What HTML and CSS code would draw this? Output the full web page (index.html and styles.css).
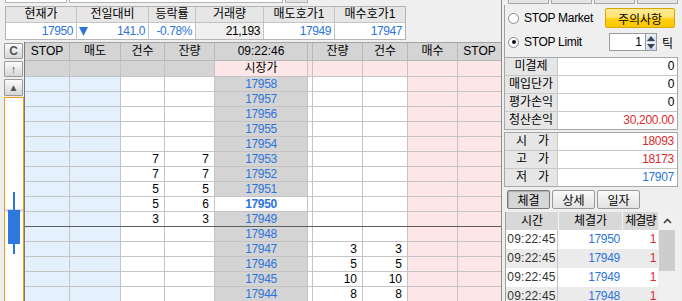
FILE: index.html
```html
<!DOCTYPE html>
<html>

<head>
  <title>STOP 주문</title>
  <link rel="stylesheet" href="styles.css">
</head>

<body>
  <div class="screen">
    <div class="left-pane">
      <div class="top-strip">
        <span class="stub stub-a"></span>
        <span class="stub stub-b"></span>
        <span class="stub stub-btn"></span>
      </div>

      <!-- 현재가 요약 -->
      <div class="summary">
        <div class="sum-head">현재가</div>
        <div class="sum-head">전일대비</div>
        <div class="sum-head">등락률</div>
        <div class="sum-head">거래량</div>
        <div class="sum-head">매도호가1</div>
        <div class="sum-head">매수호가1</div>
        <div class="sum-val blue">17950</div>
        <div class="sum-val blue change">
          <svg class="down" width="9" height="9" viewBox="0 0 9 9"><polygon points="0,0 9,0 4.5,9" fill="#2d74dc"/></svg>
          <span>141.0</span>
        </div>
        <div class="sum-val blue">-0.78%</div>
        <div class="sum-val dim">21,193</div>
        <div class="sum-val blue">17949</div>
        <div class="sum-val blue">17947</div>
      </div>

      <!-- 호가창 -->
      <div class="book">
        <div class="side">
          <div class="mini-btn bold">C</div>
          <div class="mini-btn mid">↑</div>
          <div class="mini-btn tall">▲</div>
          <div class="chart">
            <svg width="18" height="204" viewBox="0 0 18 204">
              <rect x="0" y="111" width="18" height="3" fill="#d8d8f0"/>
              <rect x="8" y="94" width="2" height="62" fill="#2d74dc"/>
              <rect x="3" y="112" width="12" height="34" fill="#2f78e0"/>
            </svg>
          </div>
        </div>

        <div class="grid">
          <div class="row head">
            <span>STOP</span><span>매도</span><span>건수</span><span>잔량</span><span>09:22:46</span><span></span><span>잔량</span><span>건수</span><span>매수</span><span>STOP</span>
          </div>
          <div class="row market">
            <span class="gr"></span><span class="gr"></span><span class="gr"></span><span class="gr"></span><span class="pk ctr">시장가</span><span class="pk"></span><span class="pk"></span><span class="pk"></span><span class="pk"></span><span class="pk"></span>
          </div>
          <div class="row"><span class="bl"></span><span class="bl"></span><span class="wh"></span><span class="wh"></span><span class="gr px">17958</span><span class="wh"></span><span class="wh"></span><span class="wh"></span><span class="pk"></span><span class="pk"></span></div>
          <div class="row"><span class="bl"></span><span class="bl"></span><span class="wh"></span><span class="wh"></span><span class="gr px">17957</span><span class="wh"></span><span class="wh"></span><span class="wh"></span><span class="pk"></span><span class="pk"></span></div>
          <div class="row"><span class="bl"></span><span class="bl"></span><span class="wh"></span><span class="wh"></span><span class="gr px">17956</span><span class="wh"></span><span class="wh"></span><span class="wh"></span><span class="pk"></span><span class="pk"></span></div>
          <div class="row"><span class="bl"></span><span class="bl"></span><span class="wh"></span><span class="wh"></span><span class="gr px">17955</span><span class="wh"></span><span class="wh"></span><span class="wh"></span><span class="pk"></span><span class="pk"></span></div>
          <div class="row"><span class="bl"></span><span class="bl"></span><span class="wh"></span><span class="wh"></span><span class="gr px">17954</span><span class="wh"></span><span class="wh"></span><span class="wh"></span><span class="pk"></span><span class="pk"></span></div>
          <div class="row"><span class="bl"></span><span class="bl"></span><span class="wh n">7</span><span class="wh n">7</span><span class="gr px">17953</span><span class="wh"></span><span class="wh"></span><span class="wh"></span><span class="pk"></span><span class="pk"></span></div>
          <div class="row"><span class="bl"></span><span class="bl"></span><span class="wh n">7</span><span class="wh n">7</span><span class="gr px">17952</span><span class="wh"></span><span class="wh"></span><span class="wh"></span><span class="pk"></span><span class="pk"></span></div>
          <div class="row"><span class="bl"></span><span class="bl"></span><span class="wh n">5</span><span class="wh n">5</span><span class="gr px">17951</span><span class="wh"></span><span class="wh"></span><span class="wh"></span><span class="pk"></span><span class="pk"></span></div>
          <div class="row"><span class="bl"></span><span class="bl"></span><span class="wh n">5</span><span class="wh n">6</span><span class="wh px now">17950</span><span class="wh"></span><span class="wh"></span><span class="wh"></span><span class="pk"></span><span class="pk"></span></div>
          <div class="row sep"><span class="bl"></span><span class="bl"></span><span class="wh n">3</span><span class="wh n">3</span><span class="gr px">17949</span><span class="wh"></span><span class="wh"></span><span class="wh"></span><span class="pk"></span><span class="pk"></span></div>
          <div class="row"><span class="bl"></span><span class="bl"></span><span class="wh"></span><span class="wh"></span><span class="gr px">17948</span><span class="wh"></span><span class="wh"></span><span class="wh"></span><span class="pk"></span><span class="pk"></span></div>
          <div class="row"><span class="bl"></span><span class="bl"></span><span class="wh"></span><span class="wh"></span><span class="gr px">17947</span><span class="wh"></span><span class="wh n">3</span><span class="wh n">3</span><span class="pk"></span><span class="pk"></span></div>
          <div class="row"><span class="bl"></span><span class="bl"></span><span class="wh"></span><span class="wh"></span><span class="gr px">17946</span><span class="wh"></span><span class="wh n">5</span><span class="wh n">5</span><span class="pk"></span><span class="pk"></span></div>
          <div class="row"><span class="bl"></span><span class="bl"></span><span class="wh"></span><span class="wh"></span><span class="gr px">17945</span><span class="wh"></span><span class="wh n">10</span><span class="wh n">10</span><span class="pk"></span><span class="pk"></span></div>
          <div class="row"><span class="bl"></span><span class="bl"></span><span class="wh"></span><span class="wh"></span><span class="gr px">17944</span><span class="wh"></span><span class="wh n">8</span><span class="wh n">8</span><span class="pk"></span><span class="pk"></span></div>
        </div>
      </div>
    </div>

    <div class="splitter"></div>

    <div class="right-pane">
      <div class="rp-top">
        <span class="rp-stub"></span><span class="rp-stub"></span><span class="rp-stub"></span><span class="rp-stub"></span>
      </div>

      <div class="opts">
        <div class="opt-row">
          <span class="radio"></span>
          <span class="opt-label">STOP Market</span>
          <button class="warn-btn">주의사항</button>
        </div>
        <div class="opt-row">
          <span class="radio checked"></span>
          <span class="opt-label">STOP Limit</span>
          <div class="spin-group">
            <div class="spin-input">1</div>
            <div class="spin-btns">
              <span class="spin-btn"><svg width="8" height="5" viewBox="0 0 8 5"><polygon points="0,5 8,5 4,0" fill="#3a4556"/></svg></span>
              <span class="spin-btn"><svg width="8" height="5" viewBox="0 0 8 5"><polygon points="0,0 8,0 4,5" fill="#3a4556"/></svg></span>
            </div>
            <span class="tick">틱</span>
          </div>
        </div>
      </div>

      <div class="info">
        <div class="info-label">미결제</div><div class="info-val">0</div>
        <div class="info-label">매입단가</div><div class="info-val">0</div>
        <div class="info-label">평가손익</div><div class="info-val">0</div>
        <div class="info-label">청산손익</div><div class="info-val red">30,200.00</div>
      </div>
      <div class="info second">
        <div class="info-label"><span class="spread">시가</span></div><div class="info-val red">18093</div>
        <div class="info-label"><span class="spread">고가</span></div><div class="info-val red">18173</div>
        <div class="info-label"><span class="spread">저가</span></div><div class="info-val blue">17907</div>
      </div>

      <div class="tabs">
        <button class="tab active">체결</button>
        <button class="tab">상세</button>
        <button class="tab">일자</button>
      </div>

      <div class="trade">
        <div class="trade-body">
          <div class="tr-head"><span>시간</span><span>체결가</span><span class="tight">체결량</span></div>
          <div class="tr-row"><span class="t">09:22:45</span><span class="blue">17950</span><span class="red">1</span></div>
          <div class="tr-row alt"><span class="t">09:22:45</span><span class="blue">17949</span><span class="red">1</span></div>
          <div class="tr-row"><span class="t">09:22:45</span><span class="blue">17949</span><span class="red">1</span></div>
          <div class="tr-row alt"><span class="t">09:22:45</span><span class="blue">17948</span><span class="red">1</span></div>
        </div>
        <div class="scroll">
          <div class="sc-up"><svg width="9" height="6" viewBox="0 0 9 6"><polyline points="1,5 4.5,1.5 8,5" fill="none" stroke="#404040" stroke-width="1.6"/></svg></div>
          <div class="sc-thumb"></div>
          <div class="sc-track"></div>
        </div>
      </div>
    </div>
  </div>
</body>

</html>
```

FILE: styles.css
```css
/* 주문창 - STOP 호가 화면 */
body {
  margin: 0;
  width: 682px;
  height: 301px;
  overflow: hidden;
  background-color: #efefef;
  font-family: "Liberation Sans", "Noto Sans CJK KR", sans-serif;
  font-size: 12px;
  color: #000000;
}

.screen {
  display: flex;
  height: 301px;
}

.left-pane {
  width: 501px;
  flex: none;
}

.splitter {
  width: 1px;
  flex: none;
  background-color: #8c8c8c;
}

.right-pane {
  flex: 1;
}

.blue {
  color: #2d74dc;
}

.red {
  color: #dd2c2c;
}

/* top controls (cut off) */
.top-strip {
  display: flex;
  gap: 2px;
  height: 5px;
  padding-left: 5px;
}

.stub {
  height: 2px;
  background-color: #ffffff;
  border: 1px solid #b4b4b4;
  border-top: none;
}

.stub-a {
  width: 60px;
}

.stub-b {
  width: 212px;
}

.stub-btn {
  width: 21px;
  background-color: #e2e2e2;
}

/* summary */
.summary {
  display: grid;
  grid-template-columns: 70px 71px 46px 67px 70px 70px;
  grid-template-rows: 15px 16px;
  gap: 1px;
  width: max-content;
  margin: 1px 0 0 5px;
  background-color: #c4c4c4;
  border: 1px solid #b4b4b4;
}

.sum-head {
  background-color: #e6e6e6;
  text-align: center;
  line-height: 15px;
}

.sum-val {
  background-color: #ffffff;
  text-align: right;
  padding-right: 3px;
  line-height: 16px;
  letter-spacing: -0.4px;
}

.sum-val.dim {
  background-color: #f0f0f0;
}

.change {
  display: flex;
  align-items: center;
  justify-content: space-between;
  padding-left: 2px;
}

/* order book */
.book {
  display: flex;
  margin-top: 2px;
}

.side {
  width: 20px;
  margin-left: 4px;
  display: flex;
  flex-direction: column;
  height: 260px;
}

.mini-btn {
  box-sizing: border-box;
  width: 19px;
  height: 16px;
  margin-top: 1px;
  border: 1px solid #9a9a9a;
  border-radius: 1px;
  background: linear-gradient(#fbfbfb, #d6d6d6);
  color: #555555;
  text-align: center;
  font-size: 11px;
  line-height: 14px;
}

.mini-btn.bold {
  font-weight: bold;
  font-size: 12px;
}

.mini-btn.mid {
  margin-top: 2px;
}

.mini-btn.tall {
  height: 17px;
  margin-top: 2px;
  line-height: 15px;
  font-size: 10px;
}

.chart {
  flex: 1;
  margin-top: 1px;
  background-color: #ffffff;
  border: 1px solid #f39a1a;
  border-bottom: none;
}

.chart svg {
  display: block;
}

.grid {
  border-left: 1px solid #7a7a7a;
}

.row {
  display: grid;
  grid-template-columns: 44px 50px 43px 49px 92px 4px 49px 44px 49px 43px;
  column-gap: 1px;
  height: 14px;
  line-height: 14px;
  background-color: #c4c4c4;
  border-bottom: 1px solid #c4c4c4;
}

.row span {
  white-space: nowrap;
  overflow: hidden;
}

.row.head {
  height: 17px;
  line-height: 17px;
  background-color: #b8b8b8;
  border-top: 1px solid #a4a4a4;
  border-bottom-color: #b8b8b8;
}

.row.head span {
  background-color: #d4d4d4;
  text-align: center;
}

.row.market {
  height: 15px;
  line-height: 15px;
}

.row.sep {
  border-bottom-color: #5e5e5e;
}

.bl {
  background-color: #e4f0fc;
}

.wh {
  background-color: #ffffff;
}

.gr {
  background-color: #d4d4d4;
}

.pk {
  background-color: #fce6e7;
}

.ctr {
  text-align: center;
}

.n {
  text-align: right;
  padding-right: 5px;
}

.px {
  text-align: center;
  color: #2d74dc;
  letter-spacing: -0.4px;
}

.px.now {
  font-weight: bold;
}

/* right pane */
.rp-top {
  display: flex;
  gap: 2px;
  height: 5px;
  padding-left: 6px;
}

.rp-stub {
  width: 39px;
  height: 3px;
  background-color: #e4e4e4;
  border: 1px solid #a8a8a8;
  border-top: none;
}

.opts {
  margin-left: 2px;
  padding: 1px 7px 3px 3px;
  border-left: 1px solid #a0a0a0;
}

.opt-row {
  display: flex;
  align-items: center;
  height: 24px;
}

.radio {
  box-sizing: border-box;
  width: 11px;
  height: 11px;
  margin-right: 5px;
  border: 1px solid #8a8a8a;
  border-radius: 50%;
  background-color: #ffffff;
  display: flex;
  align-items: center;
  justify-content: center;
}

.radio.checked::after {
  content: "";
  width: 4px;
  height: 4px;
  border-radius: 50%;
  background-color: #111111;
}

.opt-label {
  letter-spacing: -0.3px;
}

.warn-btn {
  margin-left: auto;
  width: 70px;
  height: 20px;
  padding: 0;
  border: 1px solid #d8a800;
  border-radius: 2px;
  background: linear-gradient(#ffeb94 0%, #ffe270 45%, #ffcf12 55%, #fcc800 100%);
  font-family: inherit;
  font-size: 12px;
  color: #000000;
}

.spin-group {
  margin-left: auto;
  margin-right: 2px;
  display: flex;
  align-items: center;
}

.spin-input {
  box-sizing: border-box;
  width: 36px;
  height: 18px;
  padding-right: 3px;
  border: 1px solid #9c9c9c;
  border-right: none;
  background-color: #ffffff;
  text-align: right;
  line-height: 16px;
}

.spin-btns {
  display: flex;
  flex-direction: column;
  width: 12px;
  height: 18px;
  border: 1px solid #9c9c9c;
  box-sizing: border-box;
}

.spin-btn {
  flex: 1;
  display: flex;
  align-items: center;
  justify-content: center;
  background: linear-gradient(#eaf1f9, #cfdcec);
}

.spin-btn svg {
  display: block;
}

.tick {
  margin-left: 5px;
}

.info {
  display: grid;
  grid-template-columns: 52px 1fr;
  grid-auto-rows: 17px;
  gap: 1px;
  width: 174px;
  box-sizing: border-box;
  margin-left: 2px;
  background-color: #c8c8c8;
  border: 1px solid #a8a8a8;
}

.info.second {
  margin-top: 2px;
}

.info-label {
  background-color: #e6e6e6;
  text-align: center;
  line-height: 17px;
  white-space: nowrap;
}

.spread {
  letter-spacing: 11px;
  padding-left: 11px;
}

.info-val {
  background-color: #ffffff;
  text-align: right;
  padding-right: 3px;
  line-height: 17px;
  letter-spacing: -0.3px;
}

.tabs {
  display: flex;
  gap: 2px;
  margin: 3px 0 0 5px;
}

.tab {
  width: 43px;
  height: 19px;
  padding: 0;
  border: 1px solid #9a9a9a;
  border-radius: 2px;
  background: linear-gradient(#fafafa, #e2e2e2);
  font-family: inherit;
  font-size: 12px;
  color: #000000;
}

.tab.active {
  background: #d6d6d6;
  border-color: #7a7a7a;
  box-shadow: inset 1px 1px 1px rgba(0, 0, 0, 0.2);
}

.trade {
  display: flex;
  margin: 3px 0 0 3px;
  border-left: 1px solid #a0a0a0;
}

.trade-body {
  width: 152px;
}

.tr-head {
  display: grid;
  grid-template-columns: 52px 63px 35px;
  column-gap: 1px;
  height: 18px;
  line-height: 18px;
  background-color: #f4f4f4;
}

.tr-head span {
  background-color: #d8d8d8;
  text-align: center;
  white-space: nowrap;
}

.tr-head .tight {
  letter-spacing: -0.8px;
}

.tr-row {
  display: grid;
  grid-template-columns: 52px 64px 36px;
  height: 19px;
  line-height: 19px;
  background-color: #ffffff;
}

.tr-row.alt {
  background-color: #ebebeb;
}

.tr-row span {
  text-align: right;
  padding-right: 2px;
  letter-spacing: -0.3px;
}

.tr-row .t {
  text-align: center;
  padding-right: 0;
  color: #333333;
  letter-spacing: 0.2px;
  border-right: 1px solid #c4c4c4;
}

.scroll {
  width: 18px;
  display: flex;
  flex-direction: column;
  height: 90px;
  background-color: #f0f0f0;
}

.sc-up {
  height: 18px;
  display: flex;
  align-items: center;
  justify-content: center;
}

.sc-thumb {
  height: 41px;
  margin: 0 1px;
  background-color: #cdcdcd;
}

.sc-track {
  flex: 1;
}
```
